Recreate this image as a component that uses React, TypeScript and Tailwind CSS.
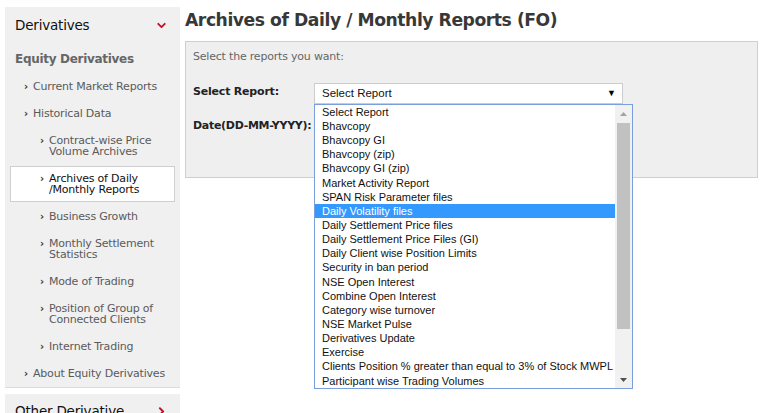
import { ChevronDown, ChevronRight } from "lucide-react";

type NavItem = { label: string[]; level: 1 | 2; active?: boolean };

const NAV: NavItem[] = [
  { label: ["Current Market Reports"], level: 1 },
  { label: ["Historical Data"], level: 1 },
  { label: ["Contract-wise Price", "Volume Archives"], level: 2 },
  { label: ["Archives of Daily", "/Monthly Reports"], level: 2, active: true },
  { label: ["Business Growth"], level: 2 },
  { label: ["Monthly Settlement", "Statistics"], level: 2 },
  { label: ["Mode of Trading"], level: 2 },
  { label: ["Position of Group of", "Connected Clients"], level: 2 },
  { label: ["Internet Trading"], level: 2 },
  { label: ["About Equity Derivatives"], level: 1 },
];

const REPORTS = [
  "Select Report",
  "Bhavcopy",
  "Bhavcopy GI",
  "Bhavcopy (zip)",
  "Bhavcopy GI (zip)",
  "Market Activity Report",
  "SPAN Risk Parameter files",
  "Daily Volatility files",
  "Daily Settlement Price files",
  "Daily Settlement Price Files (GI)",
  "Daily Client wise Position Limits",
  "Security in ban period",
  "NSE Open Interest",
  "Combine Open Interest",
  "Category wise turnover",
  "NSE Market Pulse",
  "Derivatives Update",
  "Exercise",
  "Clients Position % greater than equal to 3% of Stock MWPL",
  "Participant wise Trading Volumes",
];

const SELECTED = "Daily Volatility files";

export default function App() {
  return (
    <div className="flex h-[413px] w-[769px] overflow-hidden bg-white font-['Tahoma','DejaVu_Sans',sans-serif]">
      <Sidebar />
      <main className="ml-[5px] flex-1 pt-[7px]">
        <h1 className="text-[17.2px] font-bold leading-[26px] tracking-[-0.45px] text-[#383838]">
          Archives of Daily / Monthly Reports (FO)
        </h1>
        <ReportForm />
      </main>
    </div>
  );
}

function Sidebar() {
  return (
    <aside className="ml-[5px] mt-[7px] w-[175px] shrink-0">
      <div className="border-b border-[#dcdcdc] bg-[#f0f0f0]">
        <div className="flex h-[36px] items-center justify-between pl-[10px] pr-[12px]">
          <span className="text-[13.5px] tracking-[-0.2px] text-[#111]">Derivatives</span>
          <ChevronDown className="h-[13px] w-[13px] text-[#c0132b]" strokeWidth={3.5} />
        </div>
        <div className="flex h-[29.5px] items-center pl-[10px] pt-[3px] text-[12px] font-bold tracking-[-0.3px] text-[#666]">
          Equity Derivatives
        </div>
        <ul>
          {NAV.map((item) => (
            <NavRow key={item.label.join()} item={item} />
          ))}
        </ul>
      </div>
      <div className="mt-[6px] flex h-[36px] items-center justify-between bg-[#f0f0f0] pl-[10px] pr-[12px]">
        <span className="text-[13.5px] tracking-[-0.2px] text-[#111]">Other Derivative</span>
        <ChevronRight className="h-[13px] w-[13px] text-[#c0132b]" strokeWidth={3.5} />
      </div>
    </aside>
  );
}

function NavRow({ item }: { item: NavItem }) {
  const base = "flex text-[11px] leading-[11px] tracking-[-0.2px]";
  const row = item.active
    ? `${base} border border-[#cfcfcf] bg-white py-[6px] pl-[29px] text-[#111]`
    : `${base} py-[8px] ${item.level === 1 ? "pl-[19px]" : "pl-[35px]"} text-[#5a5a5a]`;
  return (
    <li className={item.active ? "px-[5px] py-[1px]" : ""}>
      <div className={row}>
        <span className="w-[9px] shrink-0 text-[10px] font-bold text-[#333]">›</span>
        <span>
          {item.label.map((l) => (
            <span key={l} className="block">
              {l}
            </span>
          ))}
        </span>
      </div>
    </li>
  );
}

function ReportForm() {
  return (
    <div className="mt-[8px] h-[137px] w-[573px] border border-[#cfcfcf] bg-[#efefef] px-[7px] pt-[8px]">
      <p className="text-[11px] leading-[13px] tracking-[-0.2px] text-[#666]">Select the reports you want:</p>
      <div className="mt-[20px] flex">
        <span className="w-[121px] pt-[1px] text-[11px] font-bold tracking-[-0.2px] text-[#222]">
          Select Report:
        </span>
        <div className="relative">
          <div className="flex h-[21px] w-[309px] items-center justify-between border border-[#cccccc] bg-white pl-[7px] pr-[6px] font-['Liberation_Sans',Arial,sans-serif] text-[11.5px] text-[#111]">
            <span>Select Report</span>
            <span className="text-[9px] text-black">▼</span>
          </div>
          <ReportList />
        </div>
      </div>
      <div className="mt-[14px] text-[11px] font-bold tracking-[-0.3px] text-[#222]">Date(DD-MM-YYYY):</div>
    </div>
  );
}

function ReportList() {
  return (
    <div className="absolute left-0 top-[21px] z-10 flex h-[285px] w-[319px] border border-[#7a9fdc] bg-white font-['Liberation_Sans',Arial,sans-serif] text-[11px] text-[#111]">
      <ul className="flex-1">
        {REPORTS.map((r) => (
          <li
            key={r}
            className={`flex h-[14.15px] items-center whitespace-nowrap pl-[7px] ${
              r === SELECTED ? "bg-[#3399ff] text-white" : ""
            }`}
          >
            {r}
          </li>
        ))}
      </ul>
      <div className="flex w-[17px] flex-col items-center bg-[#f1f1f1]">
        <svg width="9" height="17" viewBox="0 0 9 17" className="shrink-0">
          <path d="M1 11 L4.5 7 L8 11 Z" fill="#a3a3a3" />
        </svg>
        <div className="mt-[1px] h-[206px] w-[13px] bg-[#c1c1c1]" />
        <div className="flex-1" />
        <svg width="9" height="17" viewBox="0 0 9 17" className="shrink-0">
          <path d="M1 7 L4.5 11 L8 7 Z" fill="#505050" />
        </svg>
      </div>
    </div>
  );
}
